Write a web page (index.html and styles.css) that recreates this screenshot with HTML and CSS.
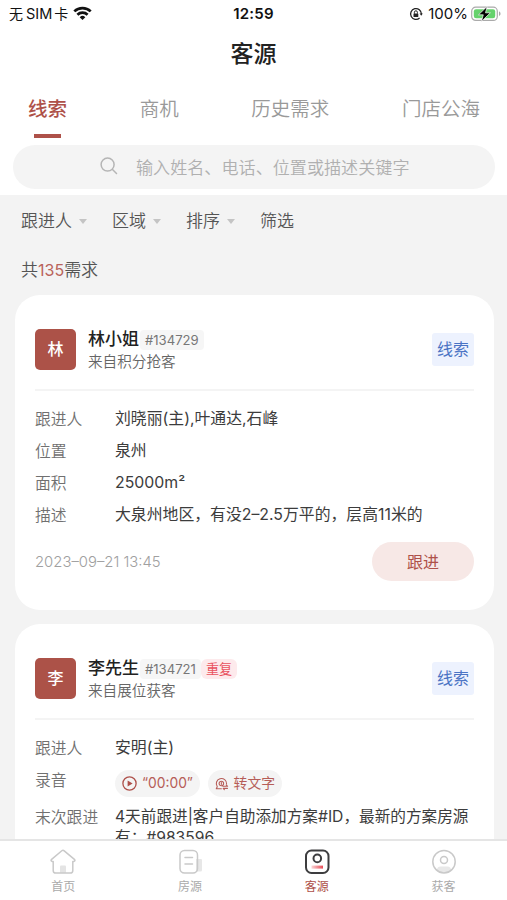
FILE: index.html
```html
<!DOCTYPE html>
<html lang="zh-CN">
<head>
<meta charset="utf-8">
<title>客源</title>
<link rel="stylesheet" href="styles.css">
</head>
<body>
<div class="app">
  <header class="top">
    <div class="status">
      <div class="carrier"><span>无</span><span class="sim">SIM</span><span>卡</span>
        <svg class="wifi" width="19" height="15" viewBox="0 0 19 15" fill="none" stroke="#111" stroke-width="2.7"><path d="M1.3 5.4a11.8 11.8 0 0 1 16.4 0M4.4 8.7a7.3 7.3 0 0 1 10.2 0"/><path d="M9.5 14l-2.8-2.8a4 4 0 0 1 5.6 0z" fill="#111" stroke="none"/></svg>
      </div>
      <div class="clock">12:59</div>
      <div class="power">
        <svg width="14" height="14" viewBox="0 0 14 14" fill="none" stroke="#222" stroke-width="1.3"><path d="M10.6 11A5.4 5.4 0 1 1 12.4 7"/><path d="M10.6 6.4h3.2l-1.6 2.4z" fill="#222" stroke="none"/><path d="M5.4 6.7V5.3a1.5 1.5 0 0 1 3 0v1.4" stroke-width="1"/><rect x="4.5" y="6.4" width="4.8" height="3.6" rx=".6" fill="#222" stroke="none"/></svg>
        <span class="percent">100%</span>
        <svg class="battery" width="31" height="16" viewBox="0 0 31 16"><rect x=".7" y="1.2" width="25.6" height="13.2" rx="4" fill="#fff" stroke="#aaa" stroke-width="1.2"/><rect x="2.8" y="3.3" width="21.4" height="9" rx="2.2" fill="#65d26c"/><path d="M28 5.6c2 .6 2 3.8 0 4.4z" fill="#aaa"/><path d="M16.200.4L7.500 8.800h4.800L10.400 15.400l9-8.600h-4.900z" fill="#000" stroke="#fff" stroke-width=".7"/></svg>
      </div>
    </div>
    <h1 class="title">客源</h1>
    <nav class="tabs">
      <a class="tab active">线索</a>
      <a class="tab">商机</a>
      <a class="tab">历史需求</a>
      <a class="tab">门店公海</a>
    </nav>
    <div class="search">
      <svg width="18" height="18" viewBox="0 0 18 18" fill="none" stroke="#b5b5b5" stroke-width="1.5" stroke-linecap="round"><circle cx="7.6" cy="7.6" r="6.5"/><path d="M12.5 12.5l4 4"/></svg>
      <span>输入姓名、电话、位置或描述关键字</span>
    </div>
  </header>
  <main class="content">
    <div class="filters">
      <span class="filter drop">跟进人</span>
      <span class="filter drop">区域</span>
      <span class="filter drop">排序</span>
      <span class="filter">筛选</span>
    </div>
    <p class="count">共<b>135</b>需求</p>

    <article class="card first">
      <div class="head">
        <div class="avatar">林</div>
        <div class="who">
          <div class="name-row"><strong class="name">林小姐</strong><span class="id">#134729</span></div>
          <div class="source">来自积分抢客</div>
        </div>
        <span class="kind">线索</span>
      </div>
      <dl class="rows">
        <div class="row"><dt>跟进人</dt><dd>刘晓丽(主),叶通达,石峰</dd></div>
        <div class="row"><dt>位置</dt><dd>泉州</dd></div>
        <div class="row"><dt>面积</dt><dd class="area">25000m²</dd></div>
        <div class="row"><dt>描述</dt><dd>大泉州地区，有没2–2.5万平的，层高11米的</dd></div>
      </dl>
      <div class="foot">
        <time>2023–09–21 13:45</time>
        <button class="follow">跟进</button>
      </div>
    </article>

    <article class="card second">
      <div class="head">
        <div class="avatar">李</div>
        <div class="who">
          <div class="name-row"><strong class="name">李先生</strong><span class="id">#134721</span><span class="dup">重复</span></div>
          <div class="source">来自展位获客</div>
        </div>
        <span class="kind">线索</span>
      </div>
      <dl class="rows">
        <div class="row"><dt>跟进人</dt><dd>安明(主)</dd></div>
        <div class="row audio"><dt>录音</dt><dd class="pills">
          <span class="pill play"><svg width="15" height="15" viewBox="0 0 15 15" fill="none" stroke="#ae504a" stroke-width="1.3"><circle cx="7.5" cy="7.5" r="6.6"/><path d="M5.6 4.4l5 3.1-5 3.1z" fill="#ae504a" stroke="none"/></svg>“00:00”</span>
          <span class="pill text"><svg width="15" height="14" viewBox="0 0 15 14" fill="none" stroke="#b65d58" stroke-width="1.2" stroke-linecap="round" stroke-linejoin="round"><path d="M7 12.3H1.4L2.5 10A5.7 5.7 0 1 1 12.8 7"/><circle cx="7" cy="6.4" r="2.5"/><path d="M7 5.4v2M8.7 9.5h5.2l-1.5-1.6M13.8 11.8H9l1.3 1.4"/></svg>转文字</span>
        </dd></div>
        <div class="row last"><dt>末次跟进</dt><dd>4天前跟进|客户自助添加方案#ID，最新的方案房源<br>有：#983596</dd></div>
      </dl>
    </article>
  </main>
  <nav class="bottom">
    <a class="item"><svg width="28" height="26" viewBox="0 0 28 26" fill="none" stroke="#c9c9c9" stroke-width="1.5" stroke-linejoin="round"><path d="M11 24v-6.5q0-1 1-1h4q1 0 1 1V24z" fill="#e4e4e4" stroke="none"/><path d="M4.2 12.4H3q-1.6-.8-.4-2L12.8 1.8q1.2-1 2.4 0l10.2 8.6q1.2 1.2-.4 2h-1.2v9q0 2.6-2.6 2.6H6.8q-2.6 0-2.6-2.6z"/></svg><span>首页</span></a>
    <a class="item"><svg width="28" height="26" viewBox="0 0 28 26" fill="none" stroke="#c9c9c9" stroke-width="1.5" stroke-linecap="round"><path d="M20 10h5q1 0 1 1v10q0 1.500-1.500 1.500H20z" fill="#e7e7e7" stroke="none"/><rect x="4" y="1.500" width="17.500" height="22.500" rx="4.500"/><path d="M9 8.500h7.500M9 15h7.500"/></svg><span>房源</span></a>
    <a class="item on"><svg width="28" height="26" viewBox="0 0 28 26" fill="none" stroke="#3d3d3f" stroke-width="2"><defs><linearGradient id="bar"><stop stop-color="#f9d5d6"/><stop offset="1" stop-color="#e84b55"/></linearGradient></defs><rect x="3" y="1.500" width="22.500" height="22.500" rx="5.500"/><circle cx="14.300" cy="9.400" r="3.800"/><rect x="8.500" y="16.600" width="11.500" height="3" fill="url(#bar)" stroke="none"/></svg><span>客源</span></a>
    <a class="item"><svg width="28" height="26" viewBox="0 0 28 26" fill="none" stroke="#c9c9c9" stroke-width="1.500"><path d="M7 21q0-3.500 3.500-3.500h7q3.500 0 3.500 3.500-7 5-14 0z" fill="#e8e8e8" stroke="none"/><circle cx="14" cy="12.700" r="11.200"/><circle cx="14" cy="11" r="3.500"/></svg><span>获客</span></a>
  </nav>
</div>
</body>
</html>
```
FILE: styles.css
```css
* { box-sizing: border-box; }
body, h1, p, dl, dd { margin: 0; }
body { font-family: Inter, "Noto Sans CJK SC", sans-serif; font-size: 16px; color: #444; background: #f3f3f3; }
.app { height: 900px; display: flex; flex-direction: column; overflow: hidden; }
.top { height: 195px; flex: none; background: #fff; }
.status { height: 28px; display: grid; grid-template-columns: 1fr 60px 1fr; align-items: center; color: #111; font-size: 15px; line-height: 28px; }
.carrier { display: flex; align-items: center; padding-left: 9px; font-size: 14px; }
.sim { margin: 0 2px 0 3px; font-size: 14.500px; }
.wifi { margin: -2px 0 0 5px; }
.clock { text-align: center; font-weight: 600; font-size: 15px; letter-spacing: .2px; }
.power { display: flex; align-items: center; justify-content: flex-end; padding-right: 5px; }
.percent { margin: 0 3px 0 5px; font-size: 15px; }
.title { height: 49px; line-height: 49px; padding-top: 2px; text-align: center; font-size: 23px; font-weight: 500; color: #222; }
.tabs { height: 68px; padding: 12px 27px 0 28px; display: flex; justify-content: space-between; }
.tab { height: 51px; line-height: 41px; font-size: 19.500px; color: #999; display: flex; flex-direction: column; align-items: center; font-weight: 350; }
.tab.active { color: #ae5149; font-weight: 500; }
.tab.active::after { content: ""; width: 27px; height: 4px; margin-top: 4px; background: #ae5149; flex: none; }
.search { height: 44px; margin: 0 12px 0 13px; border-radius: 22px; background: #f4f4f4; display: flex; align-items: center; padding: 0 0 2px 87px; gap: 18px; color: #b0b0b0; font-size: 17.100px; font-weight: 350; white-space: nowrap; }
.content { flex: 1; min-height: 0; overflow: hidden; }
.filters { height: 50px; padding: 0 0 2px 21px; display: flex; align-items: center; gap: 25px; font-size: 17px; font-weight: 350; color: #555; }
.filter { display: flex; align-items: center; }
.drop::after { content: ""; border: 4.500px solid transparent; border-top: 5px solid #c4c4c4; border-bottom: 0; margin: 4px 0 0 7px; }
.count { height: 50px; line-height: 50px; padding-left: 21px; font-size: 17px; font-weight: 350; color: #555; }
.count b { font-weight: 400; font-size: 16px; color: #b9635b; }
.card { width: 479px; margin: 0 0 14px 15px; padding: 0 20px; background: #fff; border-radius: 25px; overflow: hidden; }
.first { height: 315px; }
.second { height: 330px; }
.head { height: 96px; border-bottom: 2px solid #f4f4f4; display: flex; align-items: center; padding-top: 14px; }
.avatar { width: 41px; height: 41px; border-radius: 5px; background: #ac5248; color: #fff; font-size: 16px; font-weight: 500; line-height: 40px; text-align: center; flex: none; }
.who { margin-left: 12px; padding-top: 3px; flex: 1; }
.name-row { height: 23px; display: flex; align-items: center; }
.name { font-size: 17px; line-height: 23px; font-weight: 500; color: #222; }
.id, .dup { height: 20px; line-height: 20px; padding: 0 5px; border-radius: 4px; font-size: 13.100px; color: #777; background: #f6f6f6; }
.id { margin-left: 1px; }
.dup { color: #e9525f; background: #fdeaec; border-radius: 6px; }
.source { font-size: 14.600px; line-height: 22px; color: #666; font-weight: 350; }
.kind { width: 42px; height: 33px; line-height: 32px; text-align: center; border-radius: 3px; background: #edf2fe; color: #4a73c4; font-size: 16px; white-space: nowrap; flex: none; }
.rows { padding-top: 12px; }
.row { min-height: 32px; display: flex; line-height: 32px; }
.row dt { width: 80px; padding-top: 1px; margin-bottom: -1px; flex: none; color: #707070; font-weight: 350; font-size: 15.800px; }
.row dd { flex: 1; color: #3c3c3c; font-size: 15.850px; white-space: nowrap; }
.foot { display: flex; justify-content: space-between; align-items: center; margin-top: 11px; }
.foot time { color: #a0a0a0; font-size: 14.850px; font-weight: 350; }
.follow { width: 102px; height: 39px; padding: 0 0 2px; border: 0; border-radius: 20px; background: #f7e8e6; color: #ae5149; font: 16px Inter, "Noto Sans CJK SC", sans-serif; }
.audio { height: 37px; }
.row .pills { height: 39px; display: flex; align-items: center; gap: 8px; }
.pill { height: 27px; border-radius: 14px; background: #f4f4f4; color: #b65d58; display: flex; align-items: center; gap: 5px; padding: 0 7px; font-size: 13.800px; line-height: 27px; }
.play { width: 85px; }
.text { width: 74px; }
.row.last dd { font-size: 15.650px; line-height: 21px; padding-top: 5px; }
.bottom { height: 61px; flex: none; background: #fff; border-top: 2px solid #e5e5e5; display: grid; grid-template-columns: repeat(4, 1fr); }
.item { display: flex; flex-direction: column; align-items: center; padding-top: 8px; font-size: 12px; line-height: 23px; color: #aaa; }
.item.on { color: #ae5149; }
```
